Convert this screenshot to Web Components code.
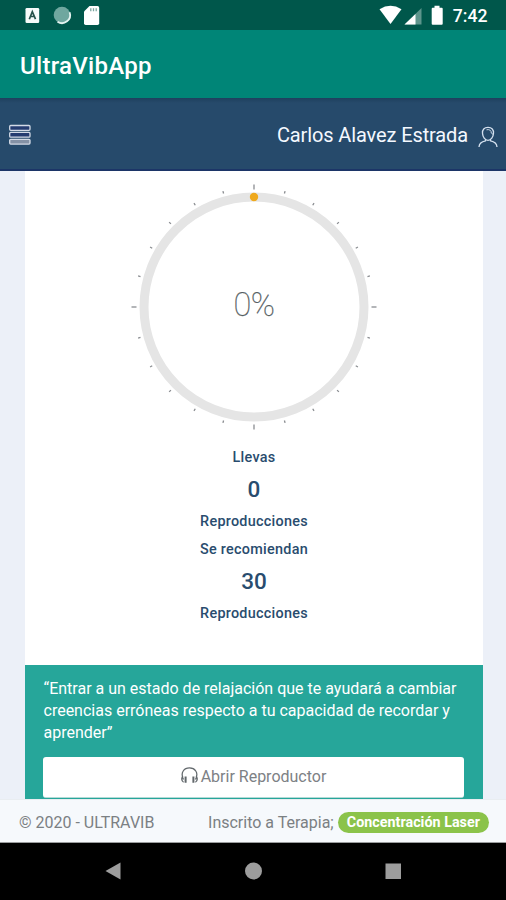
<!DOCTYPE html>
<html lang="es"><head><meta charset="utf-8"><title>UltraVibApp</title>
<style>html,body{margin:0;height:100%;overflow:hidden}body{font-family:Roboto,sans-serif;background:#ecf0f8}</style></head>
<body><ultra-app></ultra-app>
<script>
const define = (name, html) => {
  const t = document.createElement('template');
  t.innerHTML = html;
  customElements.define(name, class extends HTMLElement {
    constructor() { super(); this.attachShadow({mode: 'open'}).append(t.content.cloneNode(true)); }
  });
};

define('status-bar', `<style>
:host{display:flex;height:30px;background:#00574b;color:#fff;align-items:center;box-sizing:border-box;padding-right:18.500px}
svg{display:block;flex:none}
span{font:500 17.600px/30px Roboto,sans-serif;padding:2px 0 0 .5px}
.gap{flex:1}
</style>
<svg width="110" height="30" viewBox="0 0 110 30"><rect x="25.500" y="8" width="13.700" height="15" rx="1.300" fill="#f7fbfa"/><path d="M29.300 19.200l3-7.500 3.200 7.500M30.500 16.500h3.800" fill="none" stroke="#28534c" stroke-width="1.700"/>
<circle cx="62" cy="15" r="8.300" fill="#6fa79f"/><path d="M69.600 12.200A8.100 8.100 0 0 1 57.500 21.700" fill="none" stroke="#e4f3f0" stroke-width="1.800"/>
<path d="M89.500 6h8q1.700 0 1.700 1.700v15.600q0 1.700-1.700 1.700H85.700q-1.700 0-1.700-1.700V11.500z" fill="#fff"/><path d="M90.800 8.300v3M93.500 8.300v3M96.200 8.300v3" stroke="#7da7a0" stroke-width="1.300"/></svg>
<div class="gap"></div>
<svg width="72" height="30" viewBox="381 0 72 30" overflow="visible"><path d="M380.500 9.200Q391.500 2.500 402.500 9.200L391.500 24z" fill="#fff"/><path d="M422.500 8v16.500H405.500z" fill="#5d958c"/><path d="M416.500 14v10.500H405.500z" fill="#fff"/><path d="M435.500 5.800h5v2h2.200q1 0 1 1v15q0 1-1 1h-9q-1 0-1-1v-15q0-1 1-1h1.800z" fill="#fff"/></svg>
<span>7:42</span>`);

define('app-bar', `<style>
:host{display:flex;align-items:center;height:68px;padding:3px 0 0 20px;background:#008577;color:#fff;box-sizing:border-box;font:500 24px Roboto,sans-serif;letter-spacing:.28px}
</style><slot></slot>`);

define('user-bar', `<style>
:host{display:flex;align-items:center;height:73px;box-sizing:border-box;padding:0 8px 0 8px;background:linear-gradient(#1e405e,#264a6b 5px);border-bottom:2px solid #1c3567;color:#f4f8ff;font:400 20px Roboto,sans-serif;letter-spacing:-.12px}
div{flex:1;text-align:right;padding:3px 10px 0 0}
svg{display:block;flex:none}
</style>
<svg style="margin-top:2px" width="24" height="22" viewBox="8 124 24 22"><g fill="#253c70" stroke="#d3dae6" stroke-width="1.300"><rect x="9.700" y="125.500" width="20.300" height="4.800" rx="1"/><rect x="9.700" y="132.400" width="20.300" height="4.800" rx="1"/><rect x="9.700" y="139.300" width="20.300" height="4.800" rx="1" fill="#8491a5"/></g></svg>
<div><slot></slot></div>
<svg style="margin-top:6px" width="20" height="22" viewBox="478 126 20 22" fill="none" stroke="#d5e1ef" stroke-width="1.300"><path d="M488 127.300c3.800 0 5.800 2.400 5.500 6-.2 3.500-2.500 7-5.500 7s-5.300-3.500-5.500-7c-.3-3.600 1.700-6 5.500-6zM485.500 139v1.800c-4.500.8-6.300 2.500-6.500 6.200M490.500 139v1.800c4.500.8 6.300 2.500 6.500 6.200"/><path d="M486.500 129.800c2.500-.8 5 .5 4.800 3.300l1.700 1.200" stroke-width=".9"/></svg>`);

define('progress-ring', `<style>:host{display:grid;width:250px;height:250px;place-items:center}
svg,span{grid-area:1/1}
span{font:100 32.500px Roboto,sans-serif;letter-spacing:-.6px;color:#545d61;-webkit-text-stroke:.25px #545d61;padding-bottom:5px}
</style><svg width="250" height="250" viewBox="-125 -125 250 250"><circle r="110" fill="none" stroke="#e5e5e5" stroke-width="9"/><g id="ticks" stroke="#8a8d91" stroke-width="1.300"></g><circle cy="-110" r="4.200" fill="#efa91d"/></svg><span><slot></slot></span>`);

define('play-stat', `<style>:host{display:flex;flex-direction:column;align-items:center;color:#294c6e;font:500 14.400px/28px Roboto,sans-serif;letter-spacing:.27px}
b{font-size:22.500px;font-weight:500;line-height:36px;letter-spacing:0;margin:-1px 0 1px}</style><slot name="top"></slot><b><slot></slot></b><slot name="bottom"></slot>`);

define('player-button', `<style>:host{display:flex;align-items:center;justify-content:center;gap:3px;height:41px;box-sizing:border-box;background:#fff;border-radius:3px;border-bottom:1px solid #b5dad6;color:#7d8185;font:400 16px Roboto,sans-serif;padding:0 0 2px}
svg{display:block}</style>
<svg width="17" height="18" viewBox="0 0 17 18" fill="none" stroke="#62686c" stroke-width="1.250"><path d="M2.500 12.500C-1.200 5.200 3.500 1 8.500 1s9.700 4.200 6 11.500M2.200 9.700C.2 10 .2 14 2.600 15.200M14.800 9.700c2 .3 2 4.300-.4 5.500"/><path d="M4.600 9.500v6.300M12.400 9.500v6.300" stroke-width="2"/></svg><slot></slot>`);

define('therapy-panel', `<style>:host{display:block;height:134px;box-sizing:border-box;padding:12.500px 19px 0 18px;background:#26a69a;color:#fff}
p{margin:0 0 13.500px;height:66px;font:400 16px/22px Roboto,sans-serif;white-space:nowrap;padding-left:.5px}</style><p><slot></slot></p><slot name="action"></slot>`);

define('page-footer', `<style>:host{display:flex;align-items:center;height:44px;box-sizing:border-box;background:#f6f9fc;border-top:1px solid #e9edf1;border-bottom:1px solid #9b9d9e;color:#7b8083;font:400 16px Roboto,sans-serif;padding:3px 17px 0 19px;justify-content:space-between}
div{display:flex;align-items:center;gap:4px}
b{background:#8bc34a;color:#fff;border-radius:11px;height:21px;padding:0 9px;font:700 14.300px/21px Roboto,sans-serif;letter-spacing:.03px}</style>
<slot></slot><div><slot name="label"></slot><b><slot name="badge"></slot></b></div>`);

define('system-nav', `<style>:host{display:flex;justify-content:space-between;align-items:center;height:57px;box-sizing:border-box;background:#000;padding:0 104px 2px}
svg{display:block}</style>
<svg width="18" height="18"><path d="M1.500 9L16.500.5v17z" fill="#9d9d9d"/></svg><svg width="18" height="18"><circle cx="9.500" cy="9" r="8.500" fill="#9d9d9d"/></svg><svg width="18" height="18"><rect x="1.500" y="1.500" width="15.500" height="15.500" fill="#9d9d9d"/></svg>`);

define('ultra-app', `<style>:host{display:flex;flex-direction:column;width:506px;height:900px;overflow:hidden}
main{height:628px;margin:0 23px 0 25px;background:#fff;display:flex;flex-direction:column;box-sizing:border-box;padding-top:11px}
progress-ring{margin-left:104px}
.stats{flex:1;padding-top:12px}
</style>
<status-bar></status-bar><app-bar>UltraVibApp</app-bar><user-bar>Carlos Alavez Estrada</user-bar>
<main><progress-ring>0%</progress-ring>
<div class="stats"><play-stat><span slot="top">Llevas</span>0<span slot="bottom">Reproducciones</span></play-stat>
<play-stat><span slot="top">Se recomiendan</span>30<span slot="bottom">Reproducciones</span></play-stat></div>
<therapy-panel>“Entrar a un estado de relajación que te ayudará a cambiar<br>creencias erróneas respecto a tu capacidad de recordar y<br>aprender”<player-button slot="action">Abrir Reproductor</player-button></therapy-panel></main>
<page-footer>© 2020 - ULTRAVIB<span slot="label">Inscrito a Terapia;</span><span slot="badge">Concentración Laser</span></page-footer>
<system-nav></system-nav>`);

const ring = document.querySelector('ultra-app').shadowRoot.querySelector('progress-ring');
ring.shadowRoot.getElementById('ticks').innerHTML = Array.from({length: 24}, (_, i) =>
  `<path d="M0-117.500v${i % 6 ? -2.500 : -5}" transform="rotate(${i * 15})"/>`).join('');
</script></body></html>
